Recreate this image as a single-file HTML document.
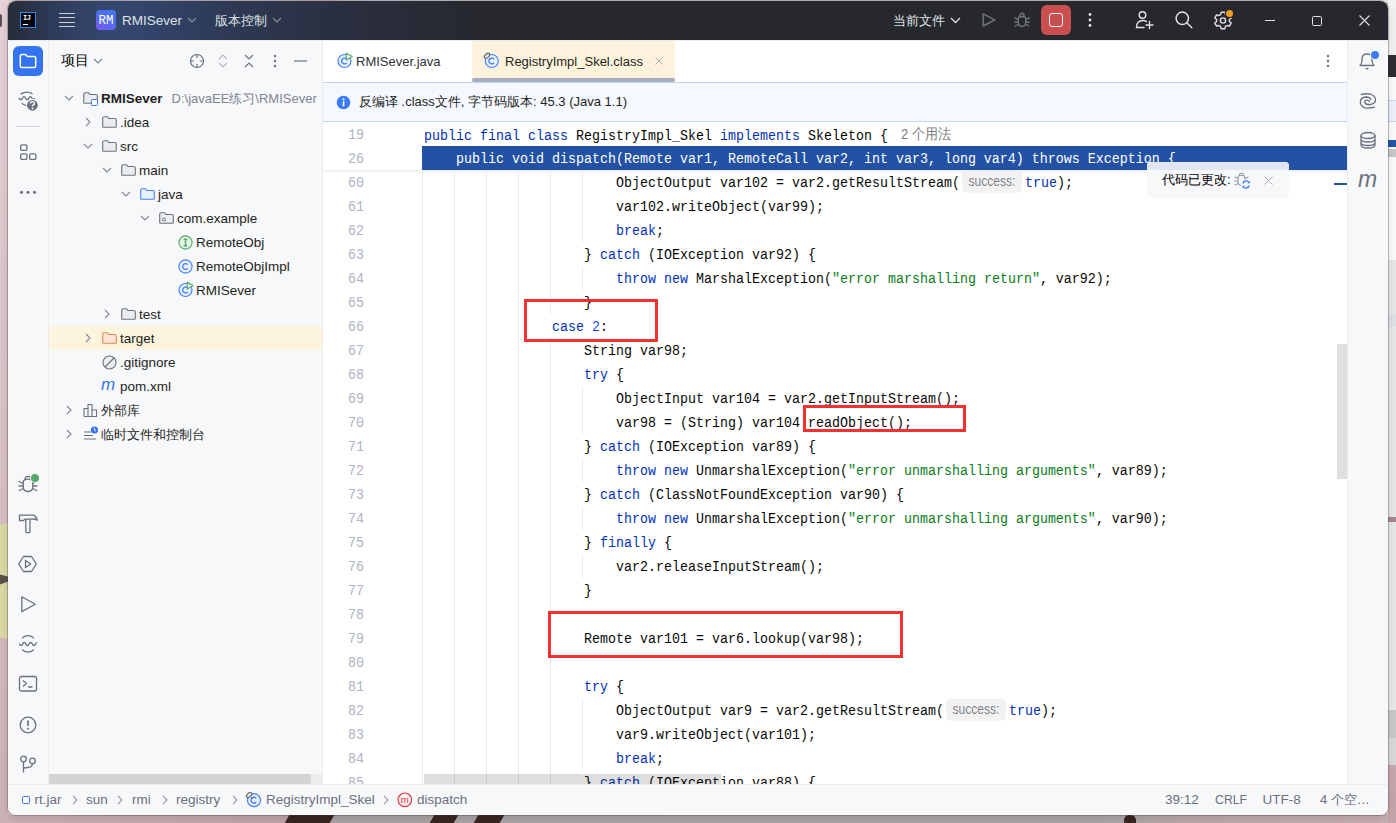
<!DOCTYPE html>
<html><head><meta charset="utf-8">
<style>
*{margin:0;padding:0;box-sizing:border-box}
html,body{width:1396px;height:823px;overflow:hidden}
body{position:relative;background:#d9c3c8;font-family:"Liberation Sans",sans-serif;font-size:13px;color:#1e1f22}
.a{position:absolute}
svg{position:absolute;overflow:visible}
#win{position:absolute;left:8px;top:1px;width:1380px;height:814px;border-radius:8px;overflow:hidden;background:#f7f8fa;box-shadow:0 0 0 1px rgba(60,60,70,.30),0 2px 8px rgba(0,0,0,.15)}
#p{position:absolute;left:-8px;top:-1px;width:1396px;height:823px}
#title{position:absolute;left:0;top:0;width:1396px;height:40px;background:linear-gradient(90deg,#262a33 0px,#2e3c5a 55px,#34486f 110px,#32446a 150px,#2d3852 240px,#2a2f40 340px,#27282e 480px,#27282d 700px)}
.tt{color:#dfe1e5;font-size:13.5px;position:absolute;top:13px;white-space:nowrap;line-height:16px}
.code{font-family:"Liberation Mono",monospace;font-size:13.333px;white-space:pre;position:absolute;line-height:24px;height:24px;left:424px;color:#080808;transform:translateY(2px) scaleY(1.15);transform-origin:0 15px}
.ln{font-family:"Liberation Mono",monospace;font-size:13.333px;color:#aeb3c2;position:absolute;line-height:24px;text-align:right;left:324px;width:40px;transform:translateY(2px) scaleY(1.15);transform-origin:0 15px}
.k{color:#0033b3}.s{color:#067d17}.n{color:#1750eb}
.tr{position:absolute;height:24px;line-height:26px;white-space:nowrap;color:#1e1f22;font-size:13.5px}
.g{position:absolute;width:1px;background:#ebecf0}
.box{position:absolute;border:3px solid #f43131}
.hint{display:inline-block;font-family:"Liberation Sans",sans-serif;font-size:12px;color:#7f828b;background:#f2f2f2;border-radius:4px;height:19px;line-height:19px;vertical-align:1px;text-align:center}
</style></head><body>
<!-- wallpaper bits -->
<div class="a" style="left:0;top:0;width:8px;height:823px;background:linear-gradient(#e6d2d6,#dcc5ca 40%,#d6bcc1 70%,#cdb2b7)"></div>
<div class="a" style="left:0;top:14px;width:1.6px;height:13px;border-radius:0 2px 2px 0;background:#5a4f52"></div>
<div class="a" style="left:-22px;top:523px;width:60px;height:116px;border-radius:50%;background:#dcd8a6"></div>
<svg style="left:0;top:574px" width="8" height="12"><path d="M0 0.5L8 2.5V7.5L0 10.5Z" fill="#5b5249"/></svg>
<div class="a" style="left:0;top:0;width:344px;height:2px;background:#e6d2d6"></div>
<div class="a" style="left:344px;top:0;width:1052px;height:2px;background:#e6e6e6"></div>
<div class="a" style="left:0;top:815px;width:1396px;height:8px;background:linear-gradient(90deg,#cbb0b5 0px,#bea4a8 280px,#a9a2a2 340px,#aaa5a5 1100px,#bda6a9 1200px,#c6aeb1 1396px)"></div>
<div class="a" style="left:287px;top:815px;width:45px;height:8px;background:#3a2422;transform:skewX(-30deg)"></div>
<div class="a" style="left:432px;top:815px;width:24px;height:8px;background:#3a2422;transform:skewX(-30deg)"></div>
<div class="a" style="left:476px;top:815px;width:26px;height:8px;background:#3a2422;transform:skewX(-30deg)"></div>
<div class="a" style="left:1124px;top:815px;width:12px;height:10px;border-radius:50% 50% 0 0;background:#3a2422"></div>
<div class="a" style="left:1388px;top:0;width:8px;height:823px;background:#e8e8e8"></div>
<div class="a" style="left:1388px;top:0;width:8px;height:55px;background:#f2f2f2"></div>
<div class="a" style="left:1388px;top:55px;width:8px;height:22px;background:#2b2d30"></div>
<div class="a" style="left:1388px;top:77px;width:8px;height:183px;background:#fafafa"></div>
<div class="a" style="left:1388px;top:100px;width:8px;height:22px;background:#eef2fa;border-top:1px solid #c9d8f5;border-bottom:1px solid #c9d8f5"></div>
<div class="a" style="left:1388px;top:140px;width:8px;height:7px;background:#2154a6"></div>
<div class="a" style="left:1388px;top:149px;width:8px;height:8px;background:#c9c9c9"></div>
<div class="a" style="left:1388px;top:314px;width:8px;height:13px;background:#dfe1e8"></div>
<div class="a" style="left:1388px;top:517px;width:8px;height:5px;background:#a88a8e"></div>
<div class="a" style="left:1388px;top:710px;width:8px;height:28px;background:#c9c9c9"></div>
<div class="a" style="left:1388px;top:738px;width:8px;height:27px;background:#dadada"></div>
<div class="a" style="left:1388px;top:765px;width:8px;height:58px;background:linear-gradient(#c8a9ae,#c2a3a8)"></div>
<div id="win"><div id="p">
  <div id="title"></div>
  <!-- IJ logo -->
  <div class="a" style="left:20px;top:12px;width:16px;height:16px;background:#000;border:1.5px solid #1e8cff"></div>
  <div class="a" style="left:23px;top:14px;font-family:'Liberation Mono',monospace;font-weight:bold;font-size:7px;line-height:8px;color:#fff;letter-spacing:-0.5px">IJ</div>
  <div class="a" style="left:23px;top:24px;width:5px;height:1px;background:#fff"></div>
  <!-- hamburger -->
  <div class="a" style="left:59px;top:12.5px;width:16px;height:1.3px;background:#d0d2d7;border-radius:1px"></div>
  <div class="a" style="left:59px;top:17px;width:16px;height:1.3px;background:#d0d2d7;border-radius:1px"></div>
  <div class="a" style="left:59px;top:21.5px;width:16px;height:1.3px;background:#d0d2d7;border-radius:1px"></div>
  <div class="a" style="left:59px;top:26px;width:16px;height:1.3px;background:#d0d2d7;border-radius:1px"></div>
  <!-- project icon -->
  <div class="a" style="left:96px;top:10px;width:20px;height:20px;border-radius:4px;background:linear-gradient(30deg,#7d5cf0,#5468ee 50%,#3a7bf0)"></div>
  <div class="a" style="left:96px;top:11px;width:20px;height:20px;line-height:20px;text-align:center;font-family:'Liberation Mono',monospace;font-size:12.5px;color:#fff;letter-spacing:0.2px;text-indent:0.2px">RM</div>
  <div class="tt" style="left:122px">RMISever</div>
  <svg style="left:187px;top:17px" width="10" height="6"><path d="M1 1L5 5L9 1" fill="none" stroke="#8b8e94" stroke-width="1.2"/></svg>
  <div class="tt" style="left:215px;font-size:13px">版本控制</div>
  <svg style="left:272px;top:17px" width="10" height="6"><path d="M1 1L5 5L9 1" fill="none" stroke="#8b8e94" stroke-width="1.2"/></svg>
  <div class="tt" style="left:893px;font-size:13px">当前文件</div>
  <svg style="left:950px;top:17px" width="11" height="7"><path d="M1 1L5.5 5.5L10 1" fill="none" stroke="#dfe1e5" stroke-width="1.3"/></svg>
  <!-- run (disabled) -->
  <svg style="left:981px;top:12px" width="16" height="16"><path d="M2.2 1.8L13.8 7.9L2.2 14Z" fill="none" stroke="#6f737a" stroke-width="1.5" stroke-linejoin="round"/></svg>
  <!-- debug (disabled) -->
  <svg style="left:1014px;top:12px" width="16" height="16"><g fill="none" stroke="#6f737a" stroke-width="1.4" stroke-linecap="round"><path d="M4.3 7Q4.3 4.5 8 4.5Q11.7 4.5 11.7 7V10Q11.7 14.5 8 14.5Q4.3 14.5 4.3 10Z"/><path d="M5.8 4.6Q5.8 1.3 8 1.3Q10.2 1.3 10.2 4.6"/><path d="M0.8 6L4.3 7.3M15.2 6L11.7 7.3M0.8 10H4.3M15.2 10H11.7M1.2 14L4.5 12.2M14.8 14L11.5 12.2"/></g></svg>
  <!-- stop -->
  <div class="a" style="left:1041px;top:5px;width:30px;height:30px;border-radius:6px;background:#c94f4f"></div>
  <div class="a" style="left:1049px;top:13px;width:14px;height:14px;border-radius:3px;border:1.8px solid #f4f4f4"></div>
  <!-- kebab -->
  
  
  
  <!-- add user -->
  <svg style="left:1135px;top:10px" width="20" height="20"><g fill="none" stroke="#dfe1e5" stroke-width="1.4" stroke-linecap="round"><circle cx="7.5" cy="5" r="3.3"/><path d="M1.5 17.5Q1.5 10.5 8 10.5Q10 10.5 11.5 11.5"/><path d="M1.5 17.5H9M14.5 11.5V18.5M11 15H18"/></g></svg>
  <!-- search -->
  <svg style="left:1175px;top:11px" width="18" height="18"><g fill="none" stroke="#dfe1e5" stroke-width="1.5" stroke-linecap="round"><circle cx="7.3" cy="7.3" r="6.2"/><path d="M11.8 11.8L16.8 16.8"/></g></svg>
  <!-- settings -->
  <svg style="left:1214px;top:11px" width="19" height="19"><g fill="none" stroke="#dfe1e5" stroke-width="1.4" stroke-linejoin="round"><path d="M7.2 1.2h3.6l.6 2.4 1.6.9 2.4-.7 1.8 3.1-1.8 1.7v1.8l1.8 1.7-1.8 3.1-2.4-.7-1.6.9-.6 2.4H7.2l-.6-2.4-1.6-.9-2.4.7L.8 12.1l1.8-1.7V8.6L.8 6.9l1.8-3.1 2.4.7 1.6-.9z"/><circle cx="9" cy="9.5" r="2.6"/></g></svg>
  <div class="a" style="left:1225.8px;top:9.8px;width:7.5px;height:7.5px;border-radius:50%;background:#f2a21e;box-shadow:0 0 0 1.2px #27282d"></div>
  <!-- window controls -->
  <div class="a" style="left:1265px;top:19.5px;width:10px;height:1px;background:#dfe1e5"></div>
  <div class="a" style="left:1312px;top:15.5px;width:10px;height:10px;border:1px solid #dfe1e5;border-radius:1.5px"></div>
  <svg style="left:1359px;top:15px" width="11" height="11"><path d="M0.5 0.5L10.5 10.5M10.5 0.5L0.5 10.5" stroke="#dfe1e5" stroke-width="1.1"/></svg>

  <!-- main areas -->
  <div class="a" style="left:322px;top:40px;width:1025px;height:744px;background:#fff"></div>
  <div class="a" style="left:0;top:40px;width:1396px;height:1px;background:#ebecf0"></div>
  <div class="a" style="left:48px;top:40px;width:1px;height:744px;background:#ebecf0"></div>
  <div class="a" style="left:322px;top:40px;width:1px;height:744px;background:#ebecf0"></div>
  <div class="a" style="left:1347px;top:40px;width:1px;height:744px;background:#ebecf0"></div>
  <svg style="left:337px;top:52px" width="17" height="17"><circle cx="7.5" cy="9" r="6.5" fill="#e7effd" stroke="#4682fa" stroke-width="1.2"/><path d="M9.72 7.14A2.9 2.9 0 1 0 9.72 10.86" fill="none" stroke="#4682fa" stroke-width="1.4"/><path d="M9.3 1.2L15.2 4.6L9.3 8Z" fill="#f0f8f2" stroke="#55a76a" stroke-width="1.2" stroke-linejoin="round"/></svg>
<div class="a" style="left:356px;top:54px;line-height:16px;color:#2f3138">RMISever.java</div>
<div class="a" style="left:472px;top:41px;width:203px;height:41px;background:#fdf3dc"></div>
<div class="a" style="left:472px;top:78px;width:203px;height:4px;background:#a7adbd;border-radius:2px"></div>
<svg style="left:483px;top:52px" width="17" height="17"><circle cx="8.8" cy="9" r="6.5" fill="#e7effd" stroke="#4682fa" stroke-width="1.2"/><path d="M11.02 7.14A2.9 2.9 0 1 0 11.02 10.86" fill="none" stroke="#4682fa" stroke-width="1.4"/><ellipse cx="4" cy="3.8" rx="3.2" ry="1.9" transform="rotate(-42 4 3.8)" fill="#e4e5e8" stroke="#5f636d" stroke-width="1.1"/><path d="M6.3 6.3L7.3 7.3" stroke="#5f636d" stroke-width="1.2"/></svg>
<div class="a" style="left:505px;top:54px;line-height:16px;color:#1e1f22">RegistryImpl_Skel.class</div>
<svg style="left:655px;top:57px" width="8" height="8"><path d="M0.5 0.5L7.5 7.5M7.5 0.5L0.5 7.5" stroke="#a8abb3" stroke-width="1"/></svg>



<div class="a" style="left:323px;top:82px;width:1024px;height:40px;background:#f5f8fe;border-top:1px solid #c2d6fc;border-bottom:1px solid #c2d6fc"></div>
<svg style="left:336px;top:95px" width="15" height="15"><circle cx="7.5" cy="7.5" r="6.8" fill="#3b7cf4"/><rect x="6.7" y="6.3" width="1.7" height="5" fill="#fff"/><circle cx="7.55" cy="4.3" r="1" fill="#fff"/></svg>
<div class="a" style="left:359px;top:94px;line-height:16px;color:#1e1f22">反编译 .class文件, 字节码版本: 45.3 (Java 1.1)</div>
<div class="a" style="left:13px;top:46px;width:30px;height:30px;border-radius:6px;background:#3574f0"></div>
<svg style="left:19px;top:53px" width="18" height="16"><path d="M1.3 3Q1.3 1.5 2.8 1.5H6.5L8.5 3.5H15Q16.7 3.5 16.7 5.2V13Q16.7 14.5 15.2 14.5H2.8Q1.3 14.5 1.3 13Z" fill="none" stroke="#fff" stroke-width="1.5"/></svg>
<div class="a" style="left:61px;top:53px;line-height:16px;font-weight:500;font-size:13.5px;color:#000">项目</div>
<svg style="left:93px;top:58px" width="10" height="6"><path d="M1 1L5 5L9 1" fill="none" stroke="#818594" stroke-width="1.2"/></svg>
<svg style="left:189px;top:53px" width="16" height="16"><g fill="none" stroke="#6c707e" stroke-width="1.2"><circle cx="8" cy="8" r="6.5"/><path d="M8 1.5V5M8 11V14.5M1.5 8H5M11 8H14.5"/></g></svg>
<svg style="left:218px;top:53px" width="10" height="16"><g fill="none" stroke="#b4b8bf" stroke-width="1.1"><path d="M1 6L5 2L9 6M1 10L5 14L9 10"/></g></svg>
<svg style="left:244px;top:53px" width="10" height="16"><g fill="none" stroke="#6c707e" stroke-width="1.1"><path d="M1 2L5 6L9 2M1 14L5 10L9 14"/></g></svg>



<div class="a" style="left:294px;top:60.2px;width:13px;height:1.6px;background:#a4a7ae"></div>
<div class="a" style="left:49px;top:326px;width:273px;height:24px;background:#fdf4dd"></div>
<svg style="left:64px;top:95px" width="10" height="6"><path d="M1 1L5 5L9 1" fill="none" stroke="#858993" stroke-width="1.1"/></svg><svg style="left:83px;top:92px" width="15" height="13"><path d="M0.7 2.2Q0.7 0.7 2.2 0.7H5.3L7 2.5H12.8Q14.3 2.5 14.3 4V10.3Q14.3 11.3 13.3 11.3H1.7Q0.7 11.3 0.7 10.3Z" fill="#ebecf0" stroke="#6c707e" stroke-width="1.1"/></svg><div class="a" style="left:91px;top:99px;width:7px;height:7px;border:1.2px solid #3574f0;border-radius:1.5px;background:#fff"></div><div class="tr" style="left:101px;top:86px"><b>RMISever</b><span style="color:#818594;margin-left:9px;font-size:13px">D:\javaEE练习\RMISever</span></div>
<svg style="left:85px;top:117px" width="6" height="10"><path d="M1 1L5 5L1 9" fill="none" stroke="#858993" stroke-width="1.1"/></svg><svg style="left:102px;top:116px" width="15" height="13"><path d="M0.7 2.2Q0.7 0.7 2.2 0.7H5.3L7 2.5H12.8Q14.3 2.5 14.3 4V10.3Q14.3 11.3 13.3 11.3H1.7Q0.7 11.3 0.7 10.3Z" fill="#ebecf0" stroke="#6c707e" stroke-width="1.1"/></svg><div class="tr" style="left:120px;top:110px">.idea</div>
<svg style="left:83px;top:143px" width="10" height="6"><path d="M1 1L5 5L9 1" fill="none" stroke="#858993" stroke-width="1.1"/></svg><svg style="left:102px;top:140px" width="15" height="13"><path d="M0.7 2.2Q0.7 0.7 2.2 0.7H5.3L7 2.5H12.8Q14.3 2.5 14.3 4V10.3Q14.3 11.3 13.3 11.3H1.7Q0.7 11.3 0.7 10.3Z" fill="#ebecf0" stroke="#6c707e" stroke-width="1.1"/></svg><div class="tr" style="left:120px;top:134px">src</div>
<svg style="left:102px;top:167px" width="10" height="6"><path d="M1 1L5 5L9 1" fill="none" stroke="#858993" stroke-width="1.1"/></svg><svg style="left:121px;top:164px" width="15" height="13"><path d="M0.7 2.2Q0.7 0.7 2.2 0.7H5.3L7 2.5H12.8Q14.3 2.5 14.3 4V10.3Q14.3 11.3 13.3 11.3H1.7Q0.7 11.3 0.7 10.3Z" fill="#ebecf0" stroke="#6c707e" stroke-width="1.1"/></svg><div class="tr" style="left:139px;top:158px">main</div>
<svg style="left:121px;top:191px" width="10" height="6"><path d="M1 1L5 5L9 1" fill="none" stroke="#858993" stroke-width="1.1"/></svg><svg style="left:140px;top:188px" width="15" height="13"><path d="M0.7 2.2Q0.7 0.7 2.2 0.7H5.3L7 2.5H12.8Q14.3 2.5 14.3 4V10.3Q14.3 11.3 13.3 11.3H1.7Q0.7 11.3 0.7 10.3Z" fill="#e7effd" stroke="#4682fa" stroke-width="1.1"/></svg><div class="tr" style="left:158px;top:182px">java</div>
<svg style="left:140px;top:215px" width="10" height="6"><path d="M1 1L5 5L9 1" fill="none" stroke="#858993" stroke-width="1.1"/></svg><svg style="left:159px;top:212px" width="15" height="13"><path d="M0.7 2.2Q0.7 0.7 2.2 0.7H5.3L7 2.5H12.8Q14.3 2.5 14.3 4V10.3Q14.3 11.3 13.3 11.3H1.7Q0.7 11.3 0.7 10.3Z" fill="#ebecf0" stroke="#6c707e" stroke-width="1.1"/></svg><svg style="left:159px;top:212px" width="15" height="13"><circle cx="5" cy="7.5" r="1.5" fill="none" stroke="#6c707e" stroke-width="0.9"/></svg><div class="tr" style="left:177px;top:206px">com.example</div>
<svg style="left:178px;top:235px" width="15" height="15"><circle cx="7.5" cy="7.5" r="6.6" fill="#e6f4ea" stroke="#55a76a" stroke-width="1.2"/><path d="M7.5 4.5V10.5M5.6 4.3H9.4M5.6 10.7H9.4" stroke="#55a76a" stroke-width="1.5" fill="none"/></svg><div class="tr" style="left:196px;top:230px">RemoteObj</div>
<svg style="left:178px;top:259px" width="15" height="15"><circle cx="7.5" cy="7.5" r="6.6" fill="#e7effd" stroke="#4682fa" stroke-width="1.2"/><path d="M9.72 5.64A2.9 2.9 0 1 0 9.72 9.36" fill="none" stroke="#4682fa" stroke-width="1.4"/></svg><div class="tr" style="left:196px;top:254px">RemoteObjImpl</div>
<svg style="left:178px;top:281px" width="17" height="17"><circle cx="7.5" cy="9" r="6.5" fill="#e7effd" stroke="#4682fa" stroke-width="1.2"/><path d="M9.72 7.14A2.9 2.9 0 1 0 9.72 10.86" fill="none" stroke="#4682fa" stroke-width="1.4"/><path d="M9.3 1.2L15.2 4.6L9.3 8Z" fill="#f0f8f2" stroke="#55a76a" stroke-width="1.2" stroke-linejoin="round"/></svg><div class="tr" style="left:196px;top:278px">RMISever</div>
<svg style="left:104px;top:309px" width="6" height="10"><path d="M1 1L5 5L1 9" fill="none" stroke="#858993" stroke-width="1.1"/></svg><svg style="left:121px;top:308px" width="15" height="13"><path d="M0.7 2.2Q0.7 0.7 2.2 0.7H5.3L7 2.5H12.8Q14.3 2.5 14.3 4V10.3Q14.3 11.3 13.3 11.3H1.7Q0.7 11.3 0.7 10.3Z" fill="#ebecf0" stroke="#6c707e" stroke-width="1.1"/></svg><div class="tr" style="left:139px;top:302px">test</div>
<svg style="left:85px;top:333px" width="6" height="10"><path d="M1 1L5 5L1 9" fill="none" stroke="#858993" stroke-width="1.1"/></svg><svg style="left:102px;top:332px" width="15" height="13"><path d="M0.7 2.2Q0.7 0.7 2.2 0.7H5.3L7 2.5H12.8Q14.3 2.5 14.3 4V10.3Q14.3 11.3 13.3 11.3H1.7Q0.7 11.3 0.7 10.3Z" fill="#fde6d5" stroke="#e08855" stroke-width="1.1"/></svg><div class="tr" style="left:120px;top:326px">target</div>
<svg style="left:102px;top:355px" width="15" height="15"><circle cx="7.5" cy="7.5" r="6.5" fill="#ebecf0" stroke="#6c707e" stroke-width="1.1"/><path d="M3 12L12 3" stroke="#6c707e" stroke-width="1.1"/></svg><div class="tr" style="left:120px;top:350px">.gitignore</div>
<div class="a" style="left:101px;top:374px;line-height:22px;font-size:17px;font-style:italic;color:#3574f0;font-family:'Liberation Sans'">m</div><div class="tr" style="left:120px;top:374px">pom.xml</div>
<svg style="left:66px;top:405px" width="6" height="10"><path d="M1 1L5 5L1 9" fill="none" stroke="#858993" stroke-width="1.1"/></svg><svg style="left:83px;top:403px" width="15" height="14"><g fill="none" stroke="#6c707e" stroke-width="1.1"><path d="M1 13.5V5.5H5V13.5M5 13.5V1.5H9V13.5M9 13.5V7H13.5V13.5H1"/></g></svg><div class="tr" style="left:101px;top:398px;font-size:13px">外部库</div>
<svg style="left:66px;top:429px" width="6" height="10"><path d="M1 1L5 5L1 9" fill="none" stroke="#858993" stroke-width="1.1"/></svg><svg style="left:83px;top:426px" width="16" height="16"><g stroke="#6c707e" stroke-width="1.1"><path d="M1 6H8M1 9.5H10M1 13H13"/></g><circle cx="11.5" cy="4" r="3.6" fill="#3574f0"/><path d="M11.5 2V4.2L13 5" stroke="#fff" stroke-width="0.9" fill="none"/></svg><div class="tr" style="left:101px;top:422px;font-size:13px">临时文件和控制台</div>
<div class="ln" style="top:122px">19</div>
<div class="code" style="top:122px"><span class="k">public final class</span> RegistryImpl_Skel <span class="k">implements</span> Skeleton { <span style="font-family:'Liberation Sans';font-size:13px;color:#808080;margin-left:5px;position:relative;top:-1px">2 个用法</span></div>
<div class="ln" style="top:146px">26</div>
<div class="a" style="left:422px;top:146px;width:925px;height:24px;background:#2352a5"></div>
<div class="code" style="top:146px;color:#fff">    public void dispatch(Remote var1, RemoteCall var2, int var3, long var4) throws Exception {</div>
<div class="a" style="left:322px;top:170px;width:1025px;height:1px;background:#ebecf0"></div>
<div class="a" style="left:322px;top:171px;width:1025px;height:3px;background:linear-gradient(rgba(0,0,0,.04),rgba(0,0,0,0))"></div>
<div class="g" style="left:422px;top:171px;height:613px"></div>
<div class="g" style="left:454px;top:171px;height:613px"></div>
<div class="g" style="left:486px;top:171px;height:613px"></div>
<div class="g" style="left:518px;top:171px;height:613px"></div>
<div class="g" style="left:550px;top:171px;height:143px"></div><div class="g" style="left:550px;top:338px;height:446px"></div>
<div class="g" style="left:582px;top:171px;height:71px"></div>
<div class="g" style="left:582px;top:266px;height:24px"></div>
<div class="g" style="left:582px;top:386px;height:48px"></div>
<div class="g" style="left:582px;top:458px;height:24px"></div>
<div class="g" style="left:582px;top:506px;height:24px"></div>
<div class="g" style="left:582px;top:554px;height:24px"></div>
<div class="g" style="left:582px;top:698px;height:72px"></div>
<div class="ln" style="top:170px">60</div>
<div class="code" style="top:170px">                        ObjectOutput var102 = var2.getResultStream(<span class="hint" style="width:60px;margin-left:2px;margin-right:3px">success:</span><span class="k">true</span>);</div>
<div class="ln" style="top:194px">61</div>
<div class="code" style="top:194px">                        var102.writeObject(var99);</div>
<div class="ln" style="top:218px">62</div>
<div class="code" style="top:218px">                        <span class="k">break</span>;</div>
<div class="ln" style="top:242px">63</div>
<div class="code" style="top:242px">                    } <span class="k">catch</span> (IOException var92) {</div>
<div class="ln" style="top:266px">64</div>
<div class="code" style="top:266px">                        <span class="k">throw new</span> MarshalException(<span class="s">"error marshalling return"</span>, var92);</div>
<div class="ln" style="top:290px">65</div>
<div class="code" style="top:290px">                    }</div>
<div class="ln" style="top:314px">66</div>
<div class="code" style="top:314px">                <span class="k">case</span> <span class="n">2</span>:</div>
<div class="ln" style="top:338px">67</div>
<div class="code" style="top:338px">                    String var98;</div>
<div class="ln" style="top:362px">68</div>
<div class="code" style="top:362px">                    <span class="k">try</span> {</div>
<div class="ln" style="top:386px">69</div>
<div class="code" style="top:386px">                        ObjectInput var104 = var2.getInputStream();</div>
<div class="ln" style="top:410px">70</div>
<div class="code" style="top:410px">                        var98 = (String) var104.readObject();</div>
<div class="ln" style="top:434px">71</div>
<div class="code" style="top:434px">                    } <span class="k">catch</span> (IOException var89) {</div>
<div class="ln" style="top:458px">72</div>
<div class="code" style="top:458px">                        <span class="k">throw new</span> UnmarshalException(<span class="s">"error unmarshalling arguments"</span>, var89);</div>
<div class="ln" style="top:482px">73</div>
<div class="code" style="top:482px">                    } <span class="k">catch</span> (ClassNotFoundException var90) {</div>
<div class="ln" style="top:506px">74</div>
<div class="code" style="top:506px">                        <span class="k">throw new</span> UnmarshalException(<span class="s">"error unmarshalling arguments"</span>, var90);</div>
<div class="ln" style="top:530px">75</div>
<div class="code" style="top:530px">                    } <span class="k">finally</span> {</div>
<div class="ln" style="top:554px">76</div>
<div class="code" style="top:554px">                        var2.releaseInputStream();</div>
<div class="ln" style="top:578px">77</div>
<div class="code" style="top:578px">                    }</div>
<div class="ln" style="top:602px">78</div>
<div class="ln" style="top:626px">79</div>
<div class="code" style="top:626px">                    Remote var101 = var6.lookup(var98);</div>
<div class="ln" style="top:650px">80</div>
<div class="ln" style="top:674px">81</div>
<div class="code" style="top:674px">                    <span class="k">try</span> {</div>
<div class="ln" style="top:698px">82</div>
<div class="code" style="top:698px">                        ObjectOutput var9 = var2.getResultStream(<span class="hint" style="width:60px;margin-left:2px;margin-right:3px">success:</span><span class="k">true</span>);</div>
<div class="ln" style="top:722px">83</div>
<div class="code" style="top:722px">                        var9.writeObject(var101);</div>
<div class="ln" style="top:746px">84</div>
<div class="code" style="top:746px">                        <span class="k">break</span>;</div>
<div class="ln" style="top:770px">85</div>
<div class="code" style="top:770px">                    } <span class="k">catch</span> (IOException var88) {</div>
<div class="a" style="left:424px;top:774px;width:297px;height:10px;background:rgba(0,0,0,.13)"></div>
<div class="a" style="left:322px;top:774px;width:1025px;height:10px;background:rgba(0,0,0,.0)"></div>
<div class="a" style="left:1337px;top:344px;width:10px;height:135px;background:#dfdfdf"></div>
<div class="a" style="left:1334px;top:183px;width:13px;height:2px;background:#2352a5"></div>
<div class="box" style="left:524px;top:299px;width:134px;height:43px"></div>
<div class="box" style="left:803px;top:405px;width:163px;height:27px"></div>
<div class="box" style="left:548px;top:611px;width:355px;height:47px"></div>
<div class="a" style="left:1147px;top:162px;width:142px;height:36px;border-radius:4px;background:#f7f8fa;overflow:hidden"><div class="a" style="left:0;top:0;width:142px;height:8px;background:#e0e6ef"></div></div>
<div class="a" style="left:1162px;top:172px;line-height:16px;color:#000">代码已更改:</div>
<svg style="left:1234px;top:172px" width="18" height="18"><g fill="none" stroke="#9a9da6" stroke-width="1.1" stroke-linecap="round"><path d="M4 6Q4 3.3 7.5 3.3Q11 3.3 11 6V9.5Q11 13.5 7.5 13.5Q4 13.5 4 9.5Z"/><path d="M5.3 3.5Q5.3 1.3 7.5 1.3Q9.7 1.3 9.7 3.5"/><path d="M0.8 5L4 6.5M14.2 5L11 6.5M0.5 9H4M1 13L4.2 11.5"/></g><circle cx="12" cy="12.5" r="5.2" fill="#f7f8fa"/><g fill="none" stroke="#3b7cf4" stroke-width="1.3"><path d="M8.8 11.5A3.3 3.3 0 0 1 14.8 10.5"/><path d="M15.2 13.5A3.3 3.3 0 0 1 9.2 14.5"/></g><path d="M15.8 8.8V11.3H13.3Z" fill="#3b7cf4"/><path d="M8.2 16.2V13.7H10.7Z" fill="#3b7cf4"/></svg>
<svg style="left:1264px;top:176px" width="9" height="9"><path d="M0.5 0.5L8.5 8.5M8.5 0.5L0.5 8.5" stroke="#a8abb3" stroke-width="1"/></svg>
<div class="a" style="left:49px;top:774px;width:262px;height:10px;background:#d3d4d6"></div>
<div class="a" style="left:311px;top:774px;width:11px;height:10px;background:#ebecee"></div>
<svg style="left:12px;top:86px" width="32" height="30"><g fill="none" stroke="#6c707e" stroke-width="1.3" stroke-linecap="round"><path d="M9.1 7.9Q14.5 4.6 20 7.6"/><path d="M7.2 12.2C8 14.2 9.6 14.2 10.4 12.2C11.2 10.2 12.8 10.2 13.6 12.2C14.4 14.2 16 14.2 16.8 12.2C17.6 10.2 19.2 10.2 20 12.2C20.5 13.2 21.5 13.5 22.5 12.8"/><path d="M10 17.6Q12.5 19.6 15.5 19.6"/></g><circle cx="20.4" cy="19.3" r="6.2" fill="#f7f8fa"/><circle cx="20.4" cy="19.3" r="5.4" fill="#6c707e"/><path d="M18.4 17.6Q18.4 15.6 20.4 15.6Q22.4 15.6 22.4 17.4Q22.4 18.6 20.5 19.3V20.3" fill="none" stroke="#fff" stroke-width="1.4"/><circle cx="20.5" cy="22.4" r="0.9" fill="#fff"/></svg>
<div class="a" style="left:16px;top:126px;width:24px;height:1px;background:#d3d5db"></div>
<svg style="left:19px;top:143px" width="20" height="18"><g fill="none" stroke="#6c707e" stroke-width="1.3"><rect x="1.7" y="1.8" width="6.2" height="5.6" rx="1.2"/><rect x="1.7" y="10.8" width="6.2" height="5.6" rx="1.2"/><rect x="10.7" y="10.8" width="6.2" height="5.6" rx="1.2"/></g></svg>



<svg style="left:18px;top:475px" width="20" height="18"><g fill="none" stroke="#6c707e" stroke-width="1.3" stroke-linecap="round"><path d="M5.2 7.5Q5.2 4.2 10 4.2Q14.8 4.2 14.8 7.5V11.5Q14.8 16.5 10 16.5Q5.2 16.5 5.2 11.5Z"/><path d="M7 4.5Q7 1.3 10 1.3Q13 1.3 13 4.5"/><path d="M1 6.5L5.2 8.3M19 6.5L14.8 8.3M1 11H5.2M19 11H14.8M1.3 15.5L5.5 13.5M18.7 15.5L14.5 13.5"/></g></svg>
<div class="a" style="left:31px;top:473.5px;width:8px;height:8px;border-radius:50%;background:#55a76a;box-shadow:0 0 0 1px #f7f8fa"></div>
<svg style="left:18px;top:513px" width="21" height="21"><g fill="none" stroke="#6c707e" stroke-width="1.3" stroke-linejoin="round"><path d="M1.5 2.2H14Q18 2.2 19.3 7.2Q16.5 5.5 13.5 6.2H7.5Q6.5 6.2 5.5 7.5L1.5 7.5Z"/><path d="M7.8 6.3V18.5Q7.8 19.7 9 19.7H10.8Q12 19.7 12 18.5V6.3"/></g></svg>
<svg style="left:18px;top:555px" width="20" height="18"><g fill="none" stroke="#6c707e" stroke-width="1.3" stroke-linejoin="round"><path d="M5.5 1.5H13.5L18.3 9L13.5 16.5H5.5L0.7 9Z"/><path d="M7.5 5.5L12.8 9L7.5 12.5Z"/></g></svg>
<svg style="left:20px;top:595px" width="17" height="18"><path d="M1.8 1.8L15.3 9.2L1.8 16.6Z" fill="none" stroke="#6c707e" stroke-width="1.3" stroke-linejoin="round"/></svg>
<svg style="left:18px;top:634px" width="20" height="20"><g fill="none" stroke="#6c707e" stroke-width="1.3" stroke-linecap="round"><path d="M4.5 3.8Q10 -0.5 15.5 3.8"/><path d="M1.5 10C2.3 12 3.9 12 4.7 10C5.5 8 7.1 8 7.9 10C8.7 12 10.3 12 11.1 10C11.9 8 13.5 8 14.3 10C15.1 12 16.7 12 17.5 10C17.9 9 18.3 8.8 18.7 8.8"/><path d="M4.5 16Q10 20.3 15.5 16"/></g></svg>
<svg style="left:18px;top:675px" width="20" height="18"><g fill="none" stroke="#6c707e" stroke-width="1.3" stroke-linejoin="round"><rect x="1.5" y="1.5" width="17" height="14.5" rx="2"/><path d="M5 5.5L8.5 8.5L5 11.5M10 12H14.5"/></g></svg>
<svg style="left:18px;top:716px" width="20" height="18"><g fill="none" stroke="#6c707e" stroke-width="1.3"><circle cx="10" cy="9" r="7.8"/></g><rect x="9.2" y="4.2" width="1.7" height="6" rx="0.8" fill="#6c707e"/><circle cx="10.05" cy="12.8" r="1" fill="#6c707e"/></svg>
<svg style="left:19px;top:755px" width="18" height="19"><g fill="none" stroke="#6c707e" stroke-width="1.3"><circle cx="4.5" cy="4" r="2.8"/><circle cx="13.5" cy="6" r="2.8"/><path d="M4.5 6.8V17.5M13.5 8.8Q13.5 13 4.5 13"/></g></svg>
<svg style="left:1358px;top:51px" width="20" height="21"><g fill="none" stroke="#6c707e" stroke-width="1.3" stroke-linejoin="round"><path d="M2 14.5H16Q14 12.5 14 9.5V8Q14 3 9 3Q4 3 4 8V9.5Q4 12.5 2 14.5Z"/></g><path d="M7 17H11L9 19Z" fill="#6c707e"/></svg>
<div class="a" style="left:1371px;top:50.5px;width:8px;height:8px;border-radius:50%;background:#3b7cf4;box-shadow:0 0 0 1px #f7f8fa"></div>
<svg style="left:1355px;top:88px" width="26" height="26"><g fill="none" stroke="#6c707e" stroke-width="1.3" stroke-linecap="round"><path d="M6.3 6.5Q12 5 16.5 6.5Q20.5 8.5 20.5 11.5Q20.5 15.5 15.5 16.5Q11.5 17 10 15Q9 13 11 12.2Q13 11.8 14.5 13.3"/><path d="M19.5 19.2Q14 20.5 10 19.8Q5.5 18.5 5.3 14Q5.5 9.5 11 9Q15 9 16 11.5"/></g></svg>
<svg style="left:1358px;top:131px" width="20" height="19"><g fill="none" stroke="#6c707e" stroke-width="1.3"><ellipse cx="10" cy="4.5" rx="7" ry="3"/><path d="M3 4.5V14Q3 17 10 17Q17 17 17 14V4.5M3 8Q3 11 10 11Q17 11 17 8M3 11.5Q3 14.5 10 14.5Q17 14.5 17 11.5"/></g></svg>
<div class="a" style="left:1358px;top:166px;font-family:'Liberation Sans';font-style:italic;font-size:23px;line-height:26px;color:#6c707e">m</div>
<div class="a" style="left:0;top:784px;width:1396px;height:40px;background:#f7f8fa"></div>
<div class="a" style="left:21.5px;top:795.5px;width:8px;height:8px;border:1.3px solid #3574f0;border-radius:1.5px"></div>
<div class="a" style="left:34.5px;top:792px;line-height:16px;font-size:13.5px;color:#6c707e">rt.jar</div>
<div class="a" style="left:86px;top:792px;line-height:16px;font-size:13.5px;color:#6c707e">sun</div>
<div class="a" style="left:132px;top:792px;line-height:16px;font-size:13.5px;color:#6c707e">rmi</div>
<div class="a" style="left:176px;top:792px;line-height:16px;font-size:13.5px;color:#6c707e">registry</div>
<div class="a" style="left:266px;top:792px;line-height:16px;font-size:13.5px;color:#6c707e">RegistryImpl_Skel</div>
<div class="a" style="left:417px;top:792px;line-height:16px;font-size:13.5px;color:#6c707e">dispatch</div>
<svg style="left:72px;top:795px" width="6" height="10"><path d="M1 1L5 5L1 9" fill="none" stroke="#9a9da6" stroke-width="1.1"/></svg>
<svg style="left:117px;top:795px" width="6" height="10"><path d="M1 1L5 5L1 9" fill="none" stroke="#9a9da6" stroke-width="1.1"/></svg>
<svg style="left:162px;top:795px" width="6" height="10"><path d="M1 1L5 5L1 9" fill="none" stroke="#9a9da6" stroke-width="1.1"/></svg>
<svg style="left:231.5px;top:795px" width="6" height="10"><path d="M1 1L5 5L1 9" fill="none" stroke="#9a9da6" stroke-width="1.1"/></svg>
<svg style="left:382.5px;top:795px" width="6" height="10"><path d="M1 1L5 5L1 9" fill="none" stroke="#9a9da6" stroke-width="1.1"/></svg>
<svg style="left:245px;top:791px" width="17" height="17"><circle cx="9" cy="9.2" r="6.5" fill="#e7effd" stroke="#4682fa" stroke-width="1.2"/><path d="M11.22 7.34A2.9 2.9 0 1 0 11.22 11.06" fill="none" stroke="#4682fa" stroke-width="1.4"/><ellipse cx="4.2" cy="4" rx="3.2" ry="1.9" transform="rotate(-42 4.2 4)" fill="#e4e5e8" stroke="#5f636d" stroke-width="1.1"/><path d="M6.5 6.5L7.5 7.5" stroke="#5f636d" stroke-width="1.2"/></svg>
<svg style="left:397px;top:792px" width="16" height="16"><circle cx="7.8" cy="7.8" r="6.8" fill="#fdeeee" stroke="#db3b4b" stroke-width="1.2"/><text x="7.8" y="11" text-anchor="middle" font-family="Liberation Sans" font-size="9.5" fill="#db3b4b">m</text></svg>
<div class="a" style="left:1165px;top:792px;line-height:16px;font-size:13.5px;color:#6c707e;white-space:nowrap">39:12</div>
<div class="a" style="left:1215px;top:792px;line-height:16px;font-size:12.3px;color:#6c707e;white-space:nowrap">CRLF</div>
<div class="a" style="left:1262.5px;top:792px;line-height:16px;font-size:13.5px;color:#6c707e;white-space:nowrap">UTF-8</div>
<div class="a" style="left:1320px;top:792px;line-height:16px;font-size:13px;color:#6c707e;white-space:nowrap">4 个空…</div>
<svg style="left:0;top:0" width="1396" height="823"><g fill="#6c707e"><circle cx="21.5" cy="192.2" r="1.5"/><circle cx="28" cy="192.2" r="1.5"/><circle cx="34.5" cy="192.2" r="1.5"/><circle cx="275" cy="56" r="1.2"/><circle cx="275" cy="61" r="1.2"/><circle cx="275" cy="66" r="1.2"/><circle cx="1328" cy="56" r="1.2"/><circle cx="1328" cy="61" r="1.2"/><circle cx="1328" cy="66" r="1.2"/></g><g fill="#dfe1e5"><circle cx="1090" cy="14.5" r="1.4"/><circle cx="1090" cy="20" r="1.4"/><circle cx="1090" cy="25.5" r="1.4"/></g></svg>
  <div class="a" style="left:0;top:784px;width:1396px;height:1px;background:#ebecf0"></div>
</div></div>
</body></html>
